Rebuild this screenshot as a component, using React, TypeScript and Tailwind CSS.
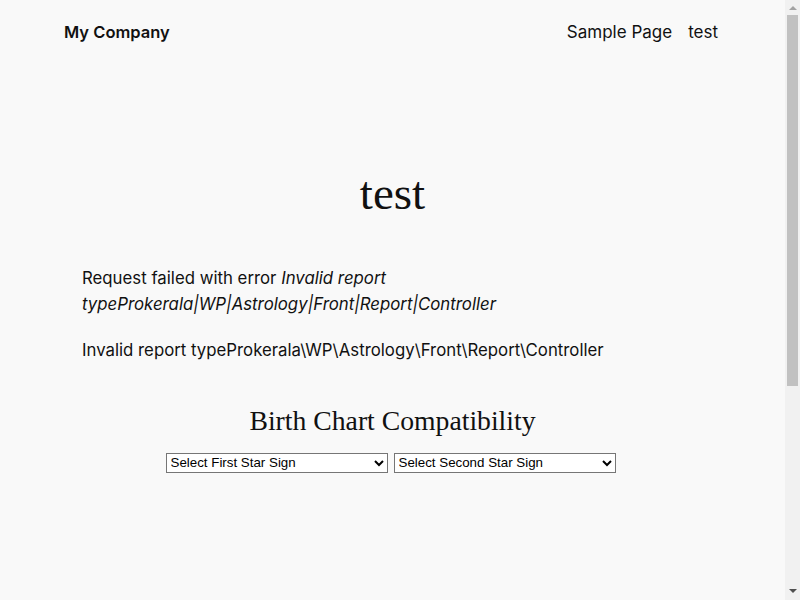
import React from "react";

const signs = ["Aries", "Taurus", "Gemini", "Cancer", "Leo", "Virgo", "Libra", "Scorpio", "Sagittarius", "Capricorn", "Aquarius", "Pisces"];

function StarSelect({ label }: { label: string }) {
  return (
    <select
      defaultValue=""
      className="w-[222px] h-[20px] border border-[#767676] bg-white text-[13.33px] text-black px-0 font-['Liberation_Sans',Arial,sans-serif]"
    >
      <option value="">{label}</option>
      {signs.map((s) => (
        <option key={s} value={s}>
          {s}
        </option>
      ))}
    </select>
  );
}

function Scrollbar() {
  return (
    <div className="w-[15px] shrink-0 h-full bg-[#f1f1f1] flex flex-col">
      <div className="h-[15px] flex items-center justify-center">
        <svg width="8" height="5" viewBox="0 0 8 5">
          <path d="M0 5 L4 1 L8 5 Z" fill="#a3a3a3" />
        </svg>
      </div>
      <div className="h-[371px] mx-[2px] bg-[#c1c1c1]" />
      <div className="flex-1" />
      <div className="h-[17px] flex items-center justify-center">
        <svg width="8" height="5" viewBox="0 0 8 5">
          <path d="M0 0 L8 0 L4 4 Z" fill="#505050" />
        </svg>
      </div>
    </div>
  );
}

export default function App() {
  return (
    <div className="h-[600px] flex overflow-hidden bg-[#f9f9f9]">
      <div className="flex-1 min-w-0 text-[#111111] font-['Inter',sans-serif] flex flex-col">
        <header className="flex items-center justify-between px-16 pt-[20px]">
          <a className="text-[16.5px] font-semibold leading-[24px]">My Company</a>
          <nav className="flex gap-[16px] text-[17px] leading-[24px] pr-[3px]">
            <a>Sample Page</a>
            <a>test</a>
          </nav>
        </header>

        <main className="flex flex-col items-center pt-[124px]">
          <h1 className="font-['Liberation_Serif',serif] text-[47px] leading-[1.1] font-normal">test</h1>

          <div className="w-[621px] mt-[45px] text-[16.8px] leading-[26px]">
            <p>
              Request failed with error{" "}
              <em>Invalid report typeProkerala|WP|Astrology|Front|Report|Controller</em>
            </p>
            <p className="mt-[20px]">Invalid report typeProkerala\WP\Astrology\Front\Report\Controller</p>
          </div>

          <h2 className="mt-[41px] font-['Liberation_Serif',serif] text-[27.7px] leading-[1.2] font-normal">
            Birth Chart Compatibility
          </h2>
          <div className="mt-[16px] mr-[4px] flex gap-[6px]">
            <StarSelect label="Select First Star Sign" />
            <StarSelect label="Select Second Star Sign" />
          </div>
        </main>
      </div>
      <Scrollbar />
    </div>
  );
}
